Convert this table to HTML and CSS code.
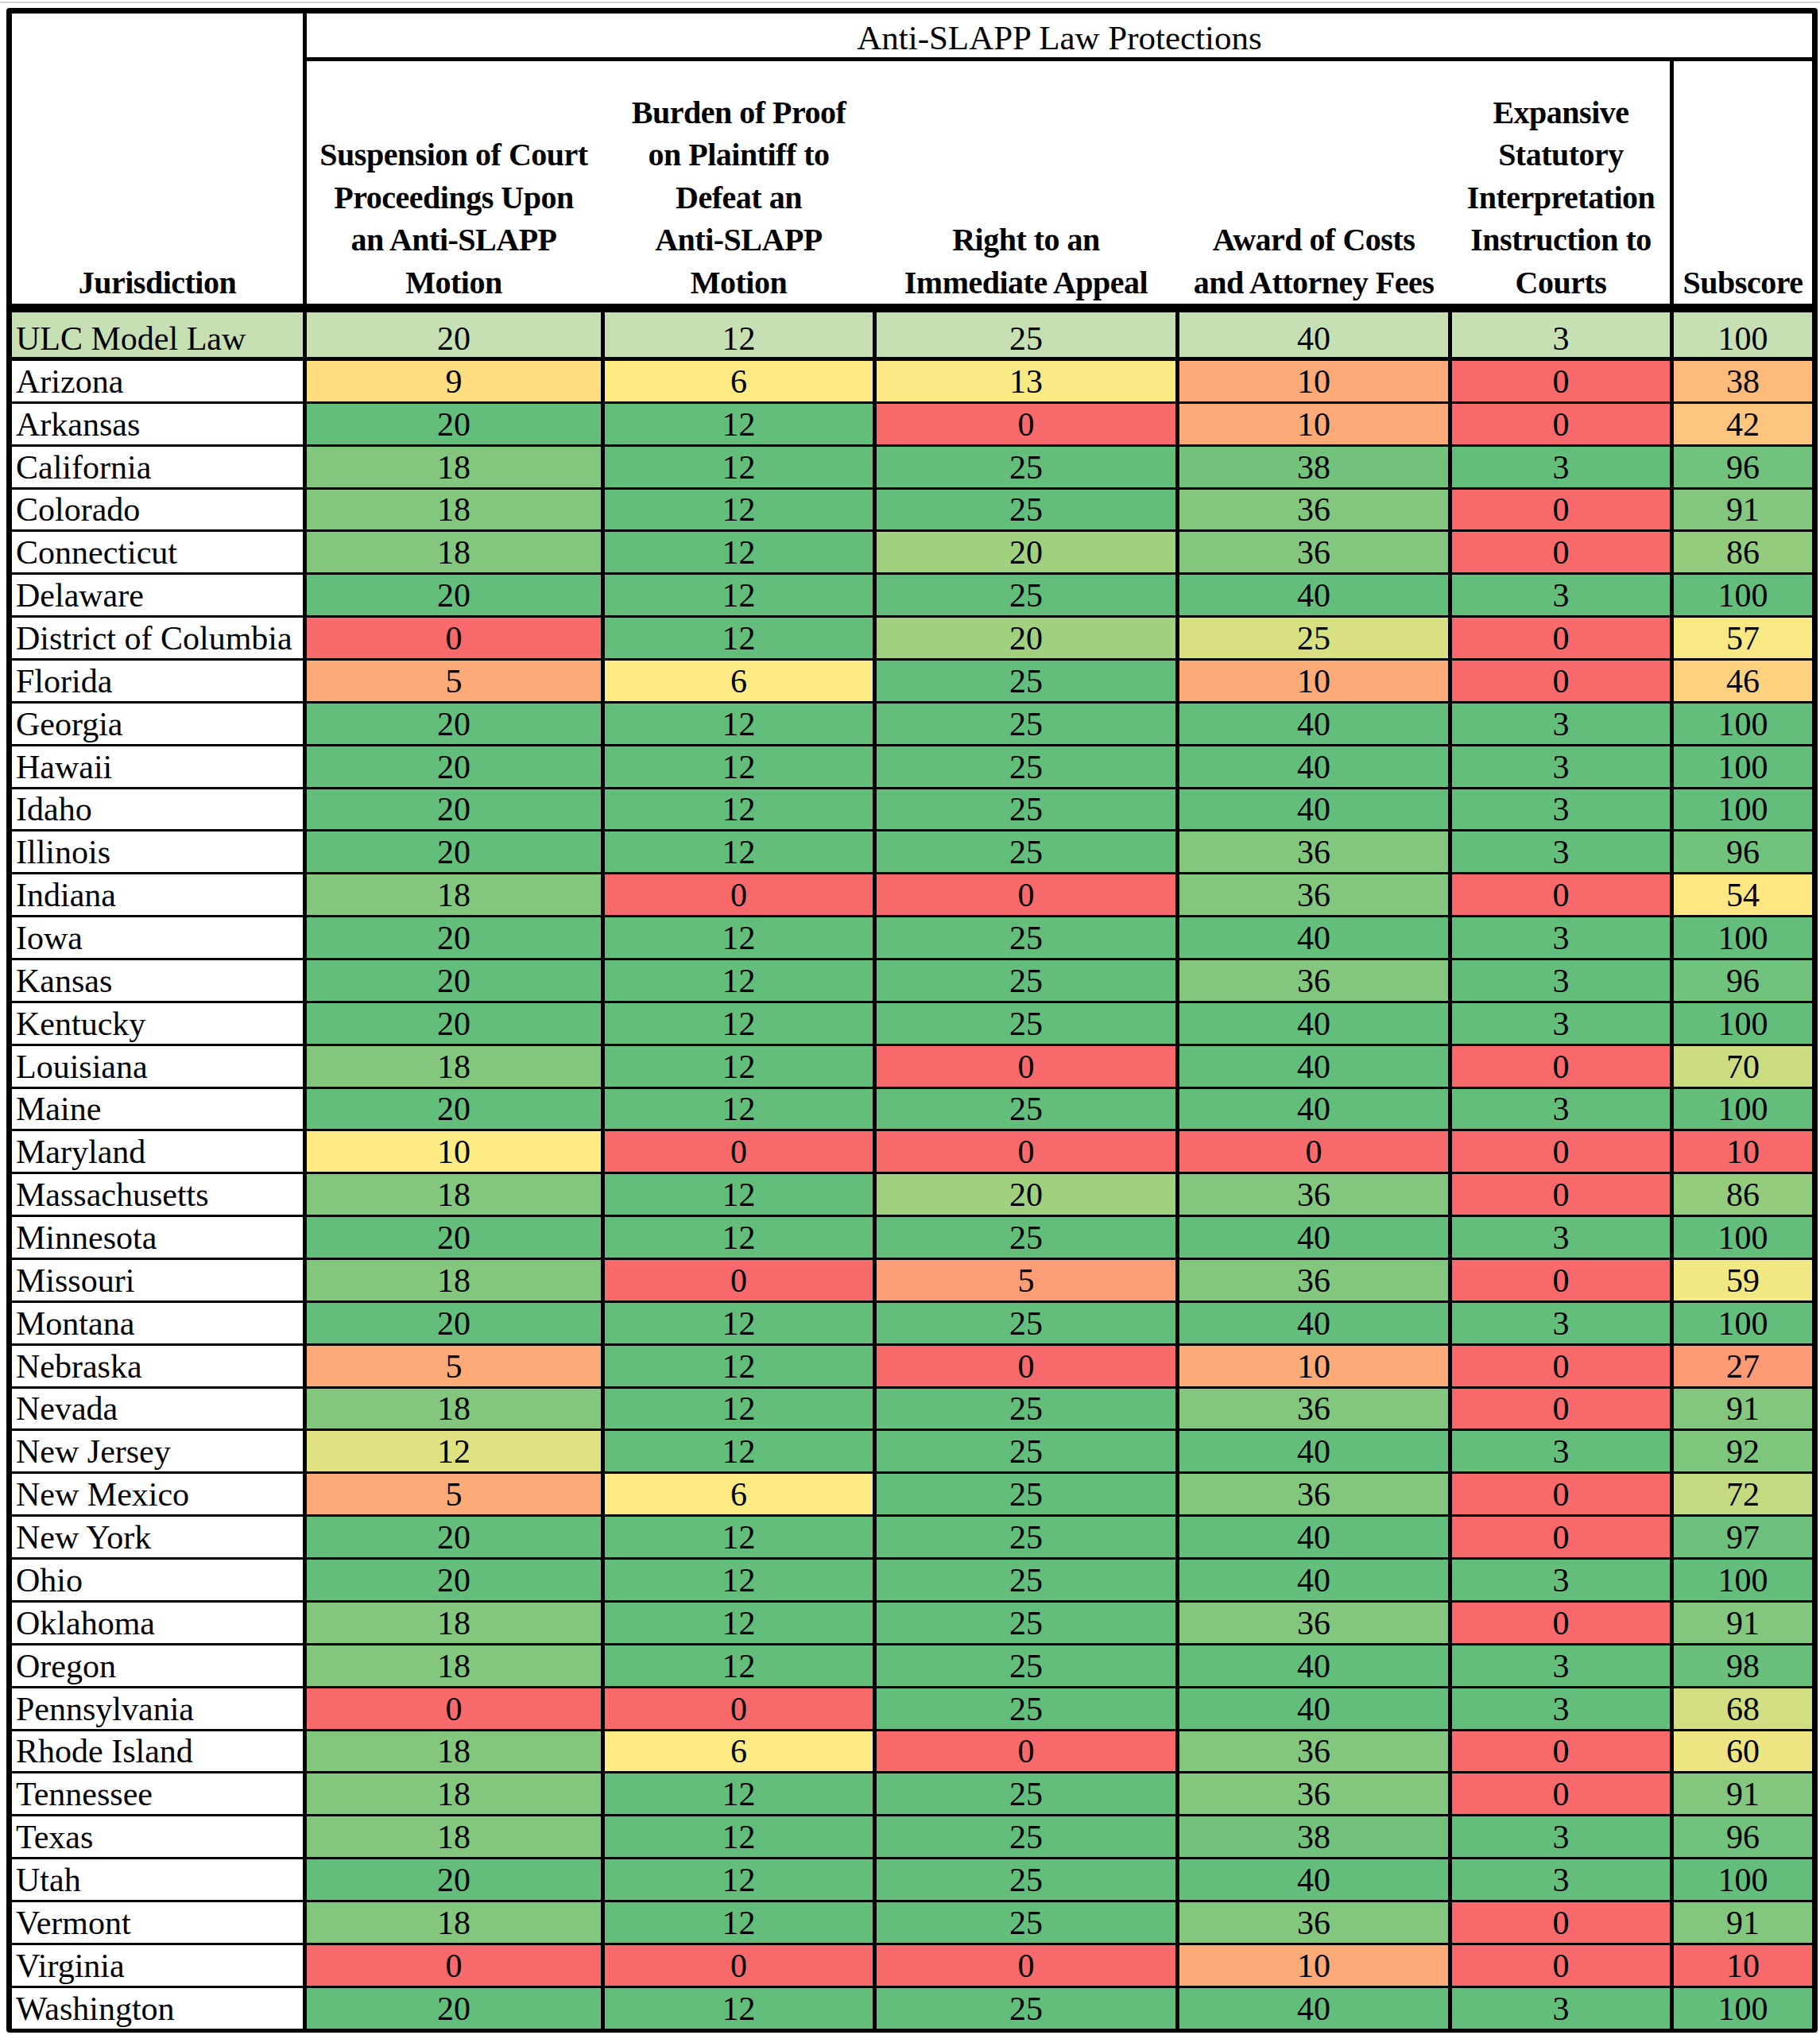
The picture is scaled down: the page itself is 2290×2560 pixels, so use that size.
FILE: index.html
```html
<!DOCTYPE html>
<html lang="en">
<head>
<meta charset="utf-8">
<title>Anti-SLAPP Law Protections</title>
<link rel="stylesheet" href="styles.css">
</head>
<body>
<div class="frame">
  <div class="sheet">
    <div class="head">
      <div class="h-jur">Jurisdiction</div>
      <div class="h-title">Anti-SLAPP Law Protections</div>
      <div class="h-group">
        <div class="h-cell">Suspension of Court<br>Proceedings Upon<br>an Anti-SLAPP<br>Motion</div>
        <div class="h-cell">Burden of Proof<br>on Plaintiff to<br>Defeat an<br>Anti-SLAPP<br>Motion</div>
        <div class="h-cell">Right to an<br>Immediate Appeal</div>
        <div class="h-cell">Award of Costs<br>and Attorney Fees</div>
        <div class="h-cell">Expansive<br>Statutory<br>Interpretation<br>Instruction to<br>Courts</div>
      </div>
      <div class="h-cell h-sub">Subscore</div>
    </div>

    <div class="model">
      <div class="c name">ULC Model Law</div>
      <div class="c">20</div><div class="c">12</div><div class="c">25</div><div class="c">40</div><div class="c">3</div><div class="c">100</div>
    </div>

    <div class="rows">
      <div class="row"><div class="c name">Arizona</div><div class="c" style="background:#FEDE81">9</div><div class="c yel">6</div><div class="c" style="background:#F9E984">13</div><div class="c or">10</div><div class="c lo">0</div><div class="c" style="background:#FCBA7B">38</div></div>
      <div class="row"><div class="c name">Arkansas</div><div class="c hi">20</div><div class="c hi">12</div><div class="c lo">0</div><div class="c or">10</div><div class="c lo">0</div><div class="c" style="background:#FDC57D">42</div></div>
      <div class="row"><div class="c name">California</div><div class="c g18">18</div><div class="c hi">12</div><div class="c hi">25</div><div class="c" style="background:#73C27C">38</div><div class="c hi">3</div><div class="c" style="background:#71C27C">96</div></div>
      <div class="row"><div class="c name">Colorado</div><div class="c g18">18</div><div class="c hi">12</div><div class="c hi">25</div><div class="c g18">36</div><div class="c lo">0</div><div class="c g18">91</div></div>
      <div class="row"><div class="c name">Connecticut</div><div class="c g18">18</div><div class="c hi">12</div><div class="c" style="background:#A1D07F">20</div><div class="c g18">36</div><div class="c lo">0</div><div class="c" style="background:#94CC7E">86</div></div>
      <div class="row"><div class="c name">Delaware</div><div class="c hi">20</div><div class="c hi">12</div><div class="c hi">25</div><div class="c hi">40</div><div class="c hi">3</div><div class="c hi">100</div></div>
      <div class="row"><div class="c name">District of Columbia</div><div class="c lo">0</div><div class="c hi">12</div><div class="c" style="background:#A1D07F">20</div><div class="c" style="background:#D8E082">25</div><div class="c lo">0</div><div class="c" style="background:#F8E984">57</div></div>
      <div class="row"><div class="c name">Florida</div><div class="c or">5</div><div class="c yel">6</div><div class="c hi">25</div><div class="c or">10</div><div class="c lo">0</div><div class="c" style="background:#FED17F">46</div></div>
      <div class="row"><div class="c name">Georgia</div><div class="c hi">20</div><div class="c hi">12</div><div class="c hi">25</div><div class="c hi">40</div><div class="c hi">3</div><div class="c hi">100</div></div>
      <div class="row"><div class="c name">Hawaii</div><div class="c hi">20</div><div class="c hi">12</div><div class="c hi">25</div><div class="c hi">40</div><div class="c hi">3</div><div class="c hi">100</div></div>
      <div class="row"><div class="c name">Idaho</div><div class="c hi">20</div><div class="c hi">12</div><div class="c hi">25</div><div class="c hi">40</div><div class="c hi">3</div><div class="c hi">100</div></div>
      <div class="row"><div class="c name">Illinois</div><div class="c hi">20</div><div class="c hi">12</div><div class="c hi">25</div><div class="c g18">36</div><div class="c hi">3</div><div class="c" style="background:#71C27C">96</div></div>
      <div class="row"><div class="c name">Indiana</div><div class="c g18">18</div><div class="c lo">0</div><div class="c lo">0</div><div class="c g18">36</div><div class="c lo">0</div><div class="c" style="background:#FFE883">54</div></div>
      <div class="row"><div class="c name">Iowa</div><div class="c hi">20</div><div class="c hi">12</div><div class="c hi">25</div><div class="c hi">40</div><div class="c hi">3</div><div class="c hi">100</div></div>
      <div class="row"><div class="c name">Kansas</div><div class="c hi">20</div><div class="c hi">12</div><div class="c hi">25</div><div class="c g18">36</div><div class="c hi">3</div><div class="c" style="background:#71C27C">96</div></div>
      <div class="row"><div class="c name">Kentucky</div><div class="c hi">20</div><div class="c hi">12</div><div class="c hi">25</div><div class="c hi">40</div><div class="c hi">3</div><div class="c hi">100</div></div>
      <div class="row"><div class="c name">Louisiana</div><div class="c g18">18</div><div class="c hi">12</div><div class="c lo">0</div><div class="c hi">40</div><div class="c lo">0</div><div class="c" style="background:#CBDC81">70</div></div>
      <div class="row"><div class="c name">Maine</div><div class="c hi">20</div><div class="c hi">12</div><div class="c hi">25</div><div class="c hi">40</div><div class="c hi">3</div><div class="c hi">100</div></div>
      <div class="row"><div class="c name">Maryland</div><div class="c yel">10</div><div class="c lo">0</div><div class="c lo">0</div><div class="c lo">0</div><div class="c lo">0</div><div class="c lo">10</div></div>
      <div class="row"><div class="c name">Massachusetts</div><div class="c g18">18</div><div class="c hi">12</div><div class="c" style="background:#A1D07F">20</div><div class="c g18">36</div><div class="c lo">0</div><div class="c" style="background:#94CC7E">86</div></div>
      <div class="row"><div class="c name">Minnesota</div><div class="c hi">20</div><div class="c hi">12</div><div class="c hi">25</div><div class="c hi">40</div><div class="c hi">3</div><div class="c hi">100</div></div>
      <div class="row"><div class="c name">Missouri</div><div class="c g18">18</div><div class="c lo">0</div><div class="c" style="background:#FB9D75">5</div><div class="c g18">36</div><div class="c lo">0</div><div class="c" style="background:#F1E783">59</div></div>
      <div class="row"><div class="c name">Montana</div><div class="c hi">20</div><div class="c hi">12</div><div class="c hi">25</div><div class="c hi">40</div><div class="c hi">3</div><div class="c hi">100</div></div>
      <div class="row"><div class="c name">Nebraska</div><div class="c or">5</div><div class="c hi">12</div><div class="c lo">0</div><div class="c or">10</div><div class="c lo">0</div><div class="c" style="background:#FB9A74">27</div></div>
      <div class="row"><div class="c name">Nevada</div><div class="c g18">18</div><div class="c hi">12</div><div class="c hi">25</div><div class="c g18">36</div><div class="c lo">0</div><div class="c g18">91</div></div>
      <div class="row"><div class="c name">New Jersey</div><div class="c" style="background:#E0E282">12</div><div class="c hi">12</div><div class="c hi">25</div><div class="c hi">40</div><div class="c hi">3</div><div class="c" style="background:#7FC67D">92</div></div>
      <div class="row"><div class="c name">New Mexico</div><div class="c or">5</div><div class="c yel">6</div><div class="c hi">25</div><div class="c g18">36</div><div class="c lo">0</div><div class="c" style="background:#C4DA81">72</div></div>
      <div class="row"><div class="c name">New York</div><div class="c hi">20</div><div class="c hi">12</div><div class="c hi">25</div><div class="c hi">40</div><div class="c lo">0</div><div class="c" style="background:#6DC17C">97</div></div>
      <div class="row"><div class="c name">Ohio</div><div class="c hi">20</div><div class="c hi">12</div><div class="c hi">25</div><div class="c hi">40</div><div class="c hi">3</div><div class="c hi">100</div></div>
      <div class="row"><div class="c name">Oklahoma</div><div class="c g18">18</div><div class="c hi">12</div><div class="c hi">25</div><div class="c g18">36</div><div class="c lo">0</div><div class="c g18">91</div></div>
      <div class="row"><div class="c name">Oregon</div><div class="c g18">18</div><div class="c hi">12</div><div class="c hi">25</div><div class="c hi">40</div><div class="c hi">3</div><div class="c" style="background:#6AC07B">98</div></div>
      <div class="row"><div class="c name">Pennsylvania</div><div class="c lo">0</div><div class="c lo">0</div><div class="c hi">25</div><div class="c hi">40</div><div class="c hi">3</div><div class="c" style="background:#D2DE81">68</div></div>
      <div class="row"><div class="c name">Rhode Island</div><div class="c g18">18</div><div class="c yel">6</div><div class="c lo">0</div><div class="c g18">36</div><div class="c lo">0</div><div class="c" style="background:#EEE683">60</div></div>
      <div class="row"><div class="c name">Tennessee</div><div class="c g18">18</div><div class="c hi">12</div><div class="c hi">25</div><div class="c g18">36</div><div class="c lo">0</div><div class="c g18">91</div></div>
      <div class="row"><div class="c name">Texas</div><div class="c g18">18</div><div class="c hi">12</div><div class="c hi">25</div><div class="c" style="background:#73C27C">38</div><div class="c hi">3</div><div class="c" style="background:#71C27C">96</div></div>
      <div class="row"><div class="c name">Utah</div><div class="c hi">20</div><div class="c hi">12</div><div class="c hi">25</div><div class="c hi">40</div><div class="c hi">3</div><div class="c hi">100</div></div>
      <div class="row"><div class="c name">Vermont</div><div class="c g18">18</div><div class="c hi">12</div><div class="c hi">25</div><div class="c g18">36</div><div class="c lo">0</div><div class="c g18">91</div></div>
      <div class="row"><div class="c name">Virginia</div><div class="c lo">0</div><div class="c lo">0</div><div class="c lo">0</div><div class="c or">10</div><div class="c lo">0</div><div class="c lo">10</div></div>
      <div class="row"><div class="c name">Washington</div><div class="c hi">20</div><div class="c hi">12</div><div class="c hi">25</div><div class="c hi">40</div><div class="c hi">3</div><div class="c hi">100</div></div>
    </div>
  </div>
</div>
</body>
</html>
```
FILE: styles.css
```css
html, body {
  margin: 0;
  padding: 0;
  background: #ffffff;
}

body {
  font-family: "Liberation Serif", "Times New Roman", serif;
  color: #000000;
  --cols: 366px 370px 337px 376px 338px 274px 174px;
}

.frame {
  margin-top: 2px;
  border-top: 2px solid #d2d2d2;
  padding: 6px 0 0 8px;
}

.sheet {
  width: max-content;
  display: flex;
  flex-direction: column;
  background: #000000;
  border: 7px solid #000000;
  border-bottom-width: 5px;
  border-radius: 4px;
}

/* ---------- header ---------- */
.head {
  display: grid;
  grid-template-columns: var(--cols);
  grid-template-rows: 55px 305px;
  gap: 5px;
}

.h-jur {
  grid-row: 1 / 3;
  background: #ffffff;
  display: flex;
  align-items: flex-end;
  justify-content: center;
  font-weight: bold;
  font-size: 40px;
  line-height: 53.5px;
  letter-spacing: -0.5px;
}

.h-title {
  grid-column: 2 / 8;
  background: #ffffff;
  display: flex;
  align-items: flex-end;
  justify-content: center;
  font-size: 43px;
  line-height: 46px;
  padding-bottom: 1px;
}

.h-group {
  grid-column: 2 / 7;
  background: #ffffff;
  display: grid;
  grid-template-columns: 370px 337px 376px 338px 274px;
  column-gap: 5px;
}

.h-cell {
  background: #ffffff;
  display: flex;
  align-items: flex-end;
  justify-content: center;
  text-align: center;
  font-weight: bold;
  font-size: 40px;
  line-height: 53.5px;
  letter-spacing: -0.5px;
}

/* ---------- body ---------- */
.model {
  margin-top: 11px;
  display: grid;
  grid-template-columns: var(--cols);
  column-gap: 5px;
  height: 56px;
}

.model .c {
  background: #c6e0b4;
  padding-bottom: 0;
}

.rows {
  margin-top: 5px;
  display: flex;
  flex-direction: column;
  gap: 3px;
}

.row {
  display: grid;
  grid-template-columns: var(--cols);
  column-gap: 5px;
  height: 50.87px;
}

.c {
  background: #ffffff;
  display: flex;
  align-items: flex-end;
  justify-content: center;
  font-size: 42px;
  line-height: 46px;
  padding-bottom: 2px;
  white-space: nowrap;
}

.name {
  justify-content: flex-start;
  padding-left: 5px;
}

/* colour scale (red - yellow - green) */
.lo  { background: #f8696b; }
.hi  { background: #63be7b; }
.g18 { background: #82c77d; }
.yel { background: #ffeb84; }
.or  { background: #fbaa78; }
```
